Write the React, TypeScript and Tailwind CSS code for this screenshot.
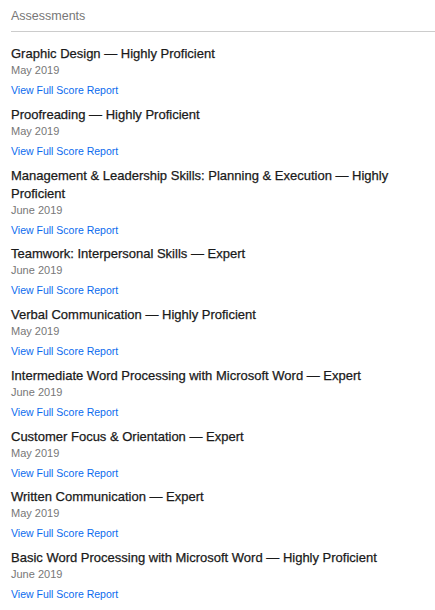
const assessments = [
  { title: 'Graphic Design — Highly Proficient', date: 'May 2019' },
  { title: 'Proofreading — Highly Proficient', date: 'May 2019' },
  { title: 'Management & Leadership Skills: Planning & Execution — Highly Proficient', date: 'June 2019' },
  { title: 'Teamwork: Interpersonal Skills — Expert', date: 'June 2019' },
  { title: 'Verbal Communication — Highly Proficient', date: 'May 2019' },
  { title: 'Intermediate Word Processing with Microsoft Word — Expert', date: 'June 2019' },
  { title: 'Customer Focus & Orientation — Expert', date: 'May 2019' },
  { title: 'Written Communication — Expert', date: 'May 2019' },
  { title: 'Basic Word Processing with Microsoft Word — Highly Proficient', date: 'June 2019' },
];

export default function App() {
  return (
    <div className="min-h-screen bg-white pl-[11px] font-['Liberation_Sans',Arial,sans-serif]">
      {/* Section header */}
      <div className="border-b border-[#cccccc] pt-[7px] pb-[6px]">
        <h2 className="text-[12.5px] leading-[18px] text-[#777777]">Assessments</h2>
      </div>

      <ul className="pt-[13px]">
        {assessments.map((a) => (
          <li key={a.title} className="pr-[44px] pb-[7.75px]">
            <h3 className="text-[13px] leading-[18px] font-medium text-[#1a1a1a] [-webkit-text-stroke:0.25px_#1a1a1a]">
              {a.title}
            </h3>
            <p className="-mt-[1px] text-[11px] leading-[16px] text-[#777777]">{a.date}</p>
            <a href="#" className="mt-[4px] block text-[10.5px] leading-[16px] text-[#0b6bee]">
              View Full Score Report
            </a>
          </li>
        ))}
      </ul>
    </div>
  );
}
